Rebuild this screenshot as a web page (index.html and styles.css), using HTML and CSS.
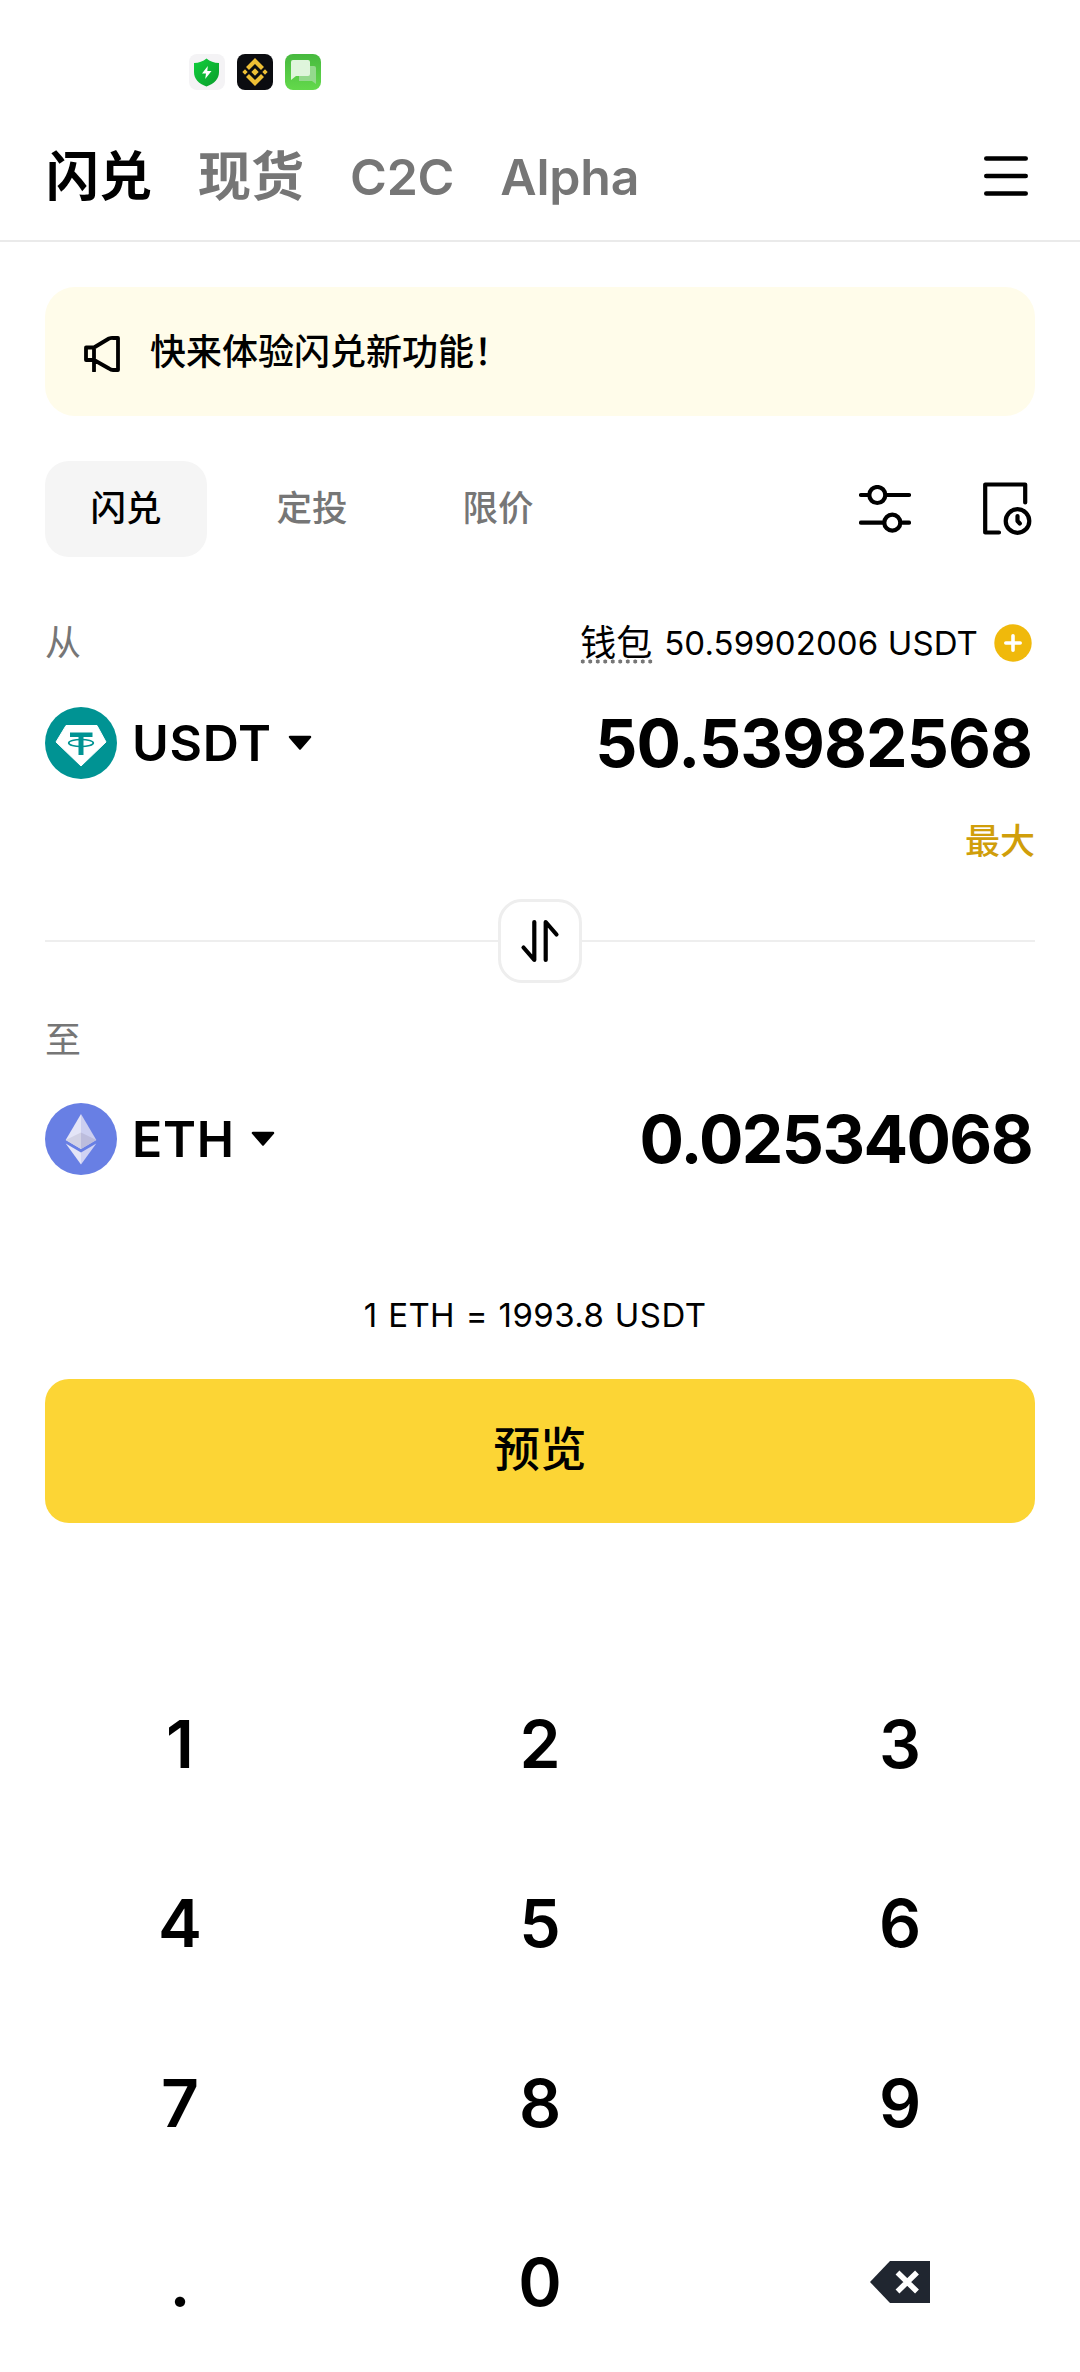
FILE: index.html
```html
<!DOCTYPE html>
<html lang="zh-CN">
<head>
<meta charset="utf-8">
<title>闪兑</title>
<link rel="stylesheet" href="styles.css">
</head>
<body>
<div class="status">
  <svg width="36" height="36" viewBox="0 0 36 36">
    <defs><linearGradient id="shield" x1="0" y1="0" x2="1" y2="1"><stop offset="0" stop-color="#10cf3c"/><stop offset="1" stop-color="#0a9d2c"/></linearGradient></defs>
    <rect width="36" height="36" rx="8" fill="#f4f3f5"/>
    <path d="M17.500 4.500C21 7.500 25 8.800 30 9V18C30 25 25.500 29.500 17.500 32.500C9.500 29.500 5 25 5 18V9C10 8.800 14 7.500 17.500 4.500Z" fill="url(#shield)"/>
    <path d="M18.800 12L13 19.500H17L16.200 25L22.500 17H18.300Z" fill="#fff"/>
  </svg>
  <svg width="36" height="36" viewBox="0 0 36 36">
    <rect width="36" height="36" rx="8" fill="#0b0c10"/>
    <path d="M10.500 14.500L18 7L25.500 14.500M10.500 21.500L18 29L25.500 21.500" fill="none" stroke="#eebf35" stroke-width="4.200"/>
    <path d="M18 14.300L21.700 18L18 21.700L14.300 18ZM8 15.300L10.700 18L8 20.700L5.300 18ZM28 15.300L30.700 18L28 20.700L25.300 18Z" fill="#eebf35"/>
  </svg>
  <svg width="36" height="36" viewBox="0 0 36 36">
    <defs><linearGradient id="chat" x1="0" y1="0" x2="0" y2="1"><stop offset="0" stop-color="#47b93f"/><stop offset="1" stop-color="#63d94b"/></linearGradient></defs>
    <rect width="36" height="36" rx="8" fill="url(#chat)"/>
    <path d="M14 12H29Q31 12 31 14V30L27 27H14Z" fill="#94d98d"/>
    <path d="M8 6H23Q25 6 25 8V20Q25 22 23 22H11L6 26V8Q6 6 8 6Z" fill="#dff5dc"/>
  </svg>
</div>

<header class="header">
  <nav class="nav">
    <span class="nav-item active">闪兑</span>
    <span class="nav-item">现货</span>
    <span class="nav-item latin">C2C</span>
    <span class="nav-item latin">Alpha</span>
  </nav>
  <svg width="60" height="60" viewBox="0 0 60 60" fill="none" stroke="#000" stroke-width="4.600" stroke-linecap="round"><path d="M10.300 12.500H49.700M10.300 30H49.700M10.300 47.500H49.700"/></svg>
</header>

<main class="main">
  <section class="banner">
    <svg width="36" height="36" viewBox="0 0 36 36" fill="none" stroke="#000" stroke-width="3.800" stroke-linejoin="round" stroke-linecap="round"><path d="M2 11.500H10V24H2ZM10 11.500L25 2.500Q27 1.800 29 2H34V34H29Q27 34 25 32.500L10 24V35"/></svg>
    <span>快来体验闪兑新功能！</span>
  </section>

  <div class="tabs">
    <span class="tab selected">闪兑</span>
    <span class="tab">定投</span>
    <span class="tab">限价</span>
    <div class="tools">
      <svg width="52" height="48" viewBox="0 0 52 48" fill="none" stroke="#000" stroke-width="4.200" stroke-linecap="round"><path d="M2 10H9.500M28 10H50M2 37.700H24M43.500 37.700H50"/><circle cx="18.300" cy="10" r="8"/><circle cx="33.300" cy="37.700" r="8"/></svg>
      <svg width="50" height="54" viewBox="0 0 50 54" fill="none" stroke="#000" stroke-width="4.200" stroke-linecap="round" stroke-linejoin="round"><path d="M42.200 20.500V2.500H2.200V50.500H16"/><circle cx="34.500" cy="39" r="11.800"/><path d="M34.500 34V39L36.800 41.500"/></svg>
    </div>
  </div>

  <div class="label-row from-row">
    <span class="label">从</span>
    <div class="balance">
      <span class="wallet">钱包</span>
      <span class="balance-value">50.59902006 USDT</span>
      <svg width="38" height="38" viewBox="0 0 38 38"><circle cx="19" cy="19" r="18.700" fill="#f0b90b"/><path d="M19 11.800V26.200M11.800 19H26.200" stroke="#fff" stroke-width="3.600" stroke-linecap="round"/></svg>
    </div>
  </div>

  <div class="token-row">
    <svg class="coin" width="72" height="72" viewBox="0 0 72 72">
      <circle cx="36" cy="36" r="36" fill="#009393"/>
      <path d="M21 18.500H52L61 35L36 59L11 35Z" fill="#fff" stroke="#fff" stroke-linejoin="round"/>
      <path d="M25 25.500H47.500V30H38.500V48H33.500V30H25Z" fill="#009393"/>
      <ellipse cx="36" cy="36" rx="12.300" ry="3.500" fill="none" stroke="#009393" stroke-width="1.700"/>
    </svg>
    <span class="symbol">USDT</span>
    <svg class="caret" width="24" height="16" viewBox="0 0 24 16"><path d="M2 2H22L12 13.500Z" stroke="#000" stroke-width="2.500" stroke-linejoin="round"/></svg>
    <span class="amount">50.53982568</span>
  </div>
  <div class="max">最大</div>

  <div class="divider">
    <div class="swap">
      <svg width="42" height="44" viewBox="0 0 42 44" fill="none" stroke="#000" stroke-width="4.200" stroke-linecap="round" stroke-linejoin="round"><path d="M15.300 3V41L4.500 28.500M26.700 41V3L37.500 15.500"/></svg>
    </div>
  </div>

  <div class="label-row to-row"><span class="label">至</span></div>
  <div class="token-row">
    <svg class="coin" width="72" height="72" viewBox="0 0 72 72">
      <circle cx="36" cy="36" r="36" fill="#687fe4"/>
      <path d="M36 11L20.700 37L36 46Z" fill="#e4e5f7"/>
      <path d="M36 11L51.300 37L36 46Z" fill="#cccff0"/>
      <path d="M36 29.500L20.700 37L36 46Z" fill="#d2d2e5"/>
      <path d="M36 29.500L51.300 37L36 46Z" fill="#bcbcdc"/>
      <path d="M20.700 40.500L36 49.500V61.500Z" fill="#e4e5f7"/>
      <path d="M51.300 40.500L36 49.500V61.500Z" fill="#d0d2f3"/>
    </svg>
    <span class="symbol">ETH</span>
    <svg class="caret" width="24" height="16" viewBox="0 0 24 16"><path d="M2 2H22L12 13.500Z" stroke="#000" stroke-width="2.500" stroke-linejoin="round"/></svg>
    <span class="amount received">0.02534068</span>
  </div>

  <div class="rate">1 ETH = 1993.8 USDT</div>
  <button class="preview">预览</button>
</main>

<div class="keypad">
  <span>1</span><span>2</span><span>3</span>
  <span>4</span><span>5</span><span>6</span>
  <span>7</span><span>8</span><span>9</span>
  <span>.</span><span>0</span>
  <span><svg width="60" height="42" viewBox="0 0 60 42"><path d="M20 0H60V42H20L0 21Z" fill="#202630"/><path d="M27.500 11.500L47 30.500M47 11.500L27.500 30.500" stroke="#fff" stroke-width="5.500"/></svg></span>
</div>
</body>
</html>
```
FILE: styles.css
```css
* { box-sizing: border-box; }

body {
  margin: 0;
  width: 1080px;
  height: 2372px;
  overflow: hidden;
  background: #fff;
  color: #000;
  font-family: Inter, "Noto Sans CJK SC", sans-serif;
  font-size: 36px;
  line-height: 48px;
}

svg { display: block; flex: none; }

.status {
  display: flex;
  gap: 12px;
  height: 112px;
  padding: 54px 0 0 189px;
}

.header {
  display: flex;
  align-items: center;
  justify-content: space-between;
  height: 130px;
  padding: 0 44px 0 46px;
  border-bottom: 2px solid #eaeaea;
}

.nav { display: flex; gap: 46px; }

.nav-item {
  padding-top: 2px;
  color: #767676;
  font-size: 53px;
  font-weight: 600;
  line-height: 64px;
}

.nav-item.active { color: #000; }

.nav-item.latin {
  font-size: 50px;
  letter-spacing: -0.2px;
}

.main { padding: 45px 45px 0; }

.banner {
  display: flex;
  align-items: center;
  gap: 30px;
  height: 129px;
  padding: 0 39px;
  border-radius: 30px;
  background: #fffcea;
  font-weight: 500;
}

.banner svg { margin-top: 5px; }

.tabs {
  display: flex;
  gap: 24px;
  height: 96px;
  margin-top: 45px;
}

.tab {
  width: 162px;
  border-radius: 24px;
  color: #767676;
  font-size: 35.5px;
  font-weight: 500;
  line-height: 96px;
  text-align: center;
}

.tab.selected { background: #f5f5f5; color: #000; }

.tools {
  display: flex;
  align-items: center;
  gap: 72px;
  margin-left: auto;
  padding-right: 2px;
}

.label-row {
  display: flex;
  justify-content: space-between;
  align-items: center;
  height: 48px;
}

.from-row { margin-top: 62px; }
.to-row { padding-top: 2px; }
.label { color: #767676; }

.balance {
  display: flex;
  align-items: center;
  padding-right: 3px;
}

.wallet {
  height: 48px;
  padding: 0 1px;
  background: radial-gradient(circle, #767676 1.8px, transparent 2.3px) 0 40px / 7.5px 5px repeat-x;
}

.balance-value {
  margin: 0 16px 0 11px;
  font-size: 33px;
  letter-spacing: 0.1px;
}

.token-row {
  display: flex;
  align-items: center;
  height: 72px;
  margin-top: 40px;
}

.symbol {
  margin-left: 15px;
  font-size: 50px;
  font-weight: 630;
  letter-spacing: 0.7px;
}

.caret { margin-left: 16px; }

.amount {
  margin-left: auto;
  padding-right: 3px;
  font-size: 66px;
  font-weight: 650;
  letter-spacing: -0.9px;
}

.amount.received { letter-spacing: -1.6px; }

.max {
  margin-top: 38px;
  color: #d09e0a;
  font-size: 35px;
  font-weight: 500;
  text-align: right;
}

.divider {
  display: flex;
  align-items: center;
  margin: 34px 0 32px;
}

.divider::before,
.divider::after {
  content: "";
  flex: 1;
  height: 2px;
  background: #eee;
}

.swap {
  display: grid;
  place-items: center;
  width: 84px;
  height: 84px;
  border: 3px solid #eee;
  border-radius: 24px;
}

.rate {
  margin: 116px 10px 40px 0;
  font-size: 33px;
  letter-spacing: 0.4px;
  word-spacing: 1px;
  text-align: center;
}

.preview {
  display: block;
  width: 100%;
  height: 144px;
  padding: 0 0 4px;
  border: 0;
  border-radius: 24px;
  background: #fcd535;
  color: #000;
  font: 500 46.5px/60px Inter, "Noto Sans CJK SC", sans-serif;
}

.keypad {
  display: grid;
  grid-template: repeat(4, 1fr) / repeat(3, 1fr);
  place-items: center;
  height: 718px;
  margin-top: 131px;
  font-size: 66px;
  font-weight: 630;
}
```
